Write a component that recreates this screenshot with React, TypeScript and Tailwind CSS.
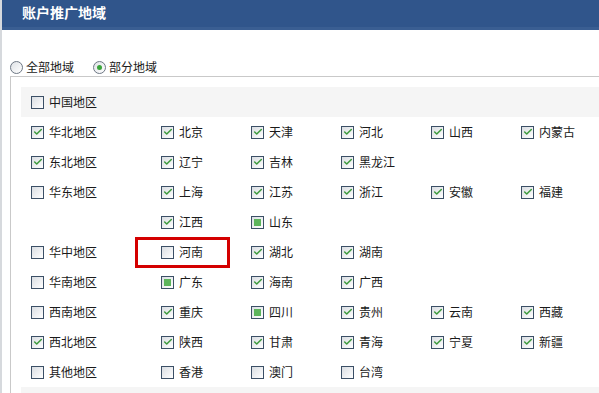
import { Check } from "lucide-react";

type State = "on" | "off" | "part";

type Region = {
  name: string;
  state: State;
  rows: [string, State][][];
};

const regions: Region[] = [
  {
    name: "华北地区",
    state: "on",
    rows: [[["北京", "on"], ["天津", "on"], ["河北", "on"], ["山西", "on"], ["内蒙古", "on"]]],
  },
  { name: "东北地区", state: "on", rows: [[["辽宁", "on"], ["吉林", "on"], ["黑龙江", "on"]]] },
  {
    name: "华东地区",
    state: "off",
    rows: [
      [["上海", "on"], ["江苏", "on"], ["浙江", "on"], ["安徽", "on"], ["福建", "on"]],
      [["江西", "on"], ["山东", "part"]],
    ],
  },
  { name: "华中地区", state: "off", rows: [[["河南", "off"], ["湖北", "on"], ["湖南", "on"]]] },
  { name: "华南地区", state: "off", rows: [[["广东", "part"], ["海南", "on"], ["广西", "on"]]] },
  {
    name: "西南地区",
    state: "off",
    rows: [[["重庆", "on"], ["四川", "part"], ["贵州", "on"], ["云南", "on"], ["西藏", "on"]]],
  },
  {
    name: "西北地区",
    state: "on",
    rows: [[["陕西", "on"], ["甘肃", "on"], ["青海", "on"], ["宁夏", "on"], ["新疆", "on"]]],
  },
  { name: "其他地区", state: "off", rows: [[["香港", "off"], ["澳门", "off"], ["台湾", "off"]]] },
];

const Box = ({ state }: { state: State }) => (
  <span className="relative flex h-[13px] w-[13px] shrink-0 items-center justify-center border border-[#3b4f66] bg-gradient-to-br from-[#d9dde2] to-white">
    {state === "on" && <Check size={10} strokeWidth={3.5} className="text-[#3c9a3c]" />}
    {state === "part" && <span className="h-[7px] w-[7px] bg-[#5cb55c]" />}
  </span>
);

const Radio = ({ on }: { on?: boolean }) => (
  <span className="flex h-[13px] w-[13px] items-center justify-center rounded-full border border-[#6d7784] bg-gradient-to-br from-[#dfe2e6] to-white">
    {on && <span className="h-[5px] w-[5px] rounded-full bg-[#3aa43a]" />}
  </span>
);

const Item = ({ label, state }: { label: string; state: State }) => (
  <label className="flex items-center gap-[5px]">
    <Box state={state} />
    <span>{label}</span>
  </label>
);

export default function App() {
  return (
    <div
      className="relative h-[393px] w-[599px] overflow-hidden border-l-2 border-[#d6d9dd] bg-white text-[12px] leading-[18px] text-[#1a1a1a]"
      style={{ fontFamily: '"Noto Sans CJK SC", "Noto Sans", sans-serif' }}
    >
      <div className="flex h-[30px] items-start bg-[#30558b] pl-[20px] pt-[3px] text-[14px] font-bold text-white shadow-[inset_0_-3px_0_#3a5e92]">
        账户推广地域
      </div>

      <div className="flex items-center gap-[19px] pl-[8px] pt-[28px]">
        <label className="flex items-center gap-[3px]">
          <Radio />
          <span>全部地域</span>
        </label>
        <label className="flex items-center gap-[3px]">
          <Radio on />
          <span>部分地域</span>
        </label>
      </div>

      <div className="ml-[8px] w-[700px] border-l border-t border-[#c9c9c9] pl-[10px] pt-[10px]">
        <div className="flex h-[30px] items-center bg-[#f5f5f5] pl-[10px]">
          <Item label="中国地区" state="off" />
        </div>

        {regions.map((r) =>
          r.rows.map((row, ri) => (
            <div key={r.name + ri} className="flex h-[30px] items-center pl-[10px]">
              <div className="w-[130px] shrink-0">{ri === 0 && <Item label={r.name} state={r.state} />}</div>
              {row.map(([p, s]) => (
                <div key={p} className="relative flex h-[30px] w-[90px] shrink-0 items-center">
                  <Item label={p} state={s} />
                  {p === "河南" && (
                    <span className="pointer-events-none absolute left-[-26px] top-0 h-[31px] w-[95px] border-[3px] border-[#d40000]" />
                  )}
                </div>
              ))}
            </div>
          ))
        )}

        <div className="h-[30px] bg-[#f5f5f5]" />
      </div>
    </div>
  );
}
